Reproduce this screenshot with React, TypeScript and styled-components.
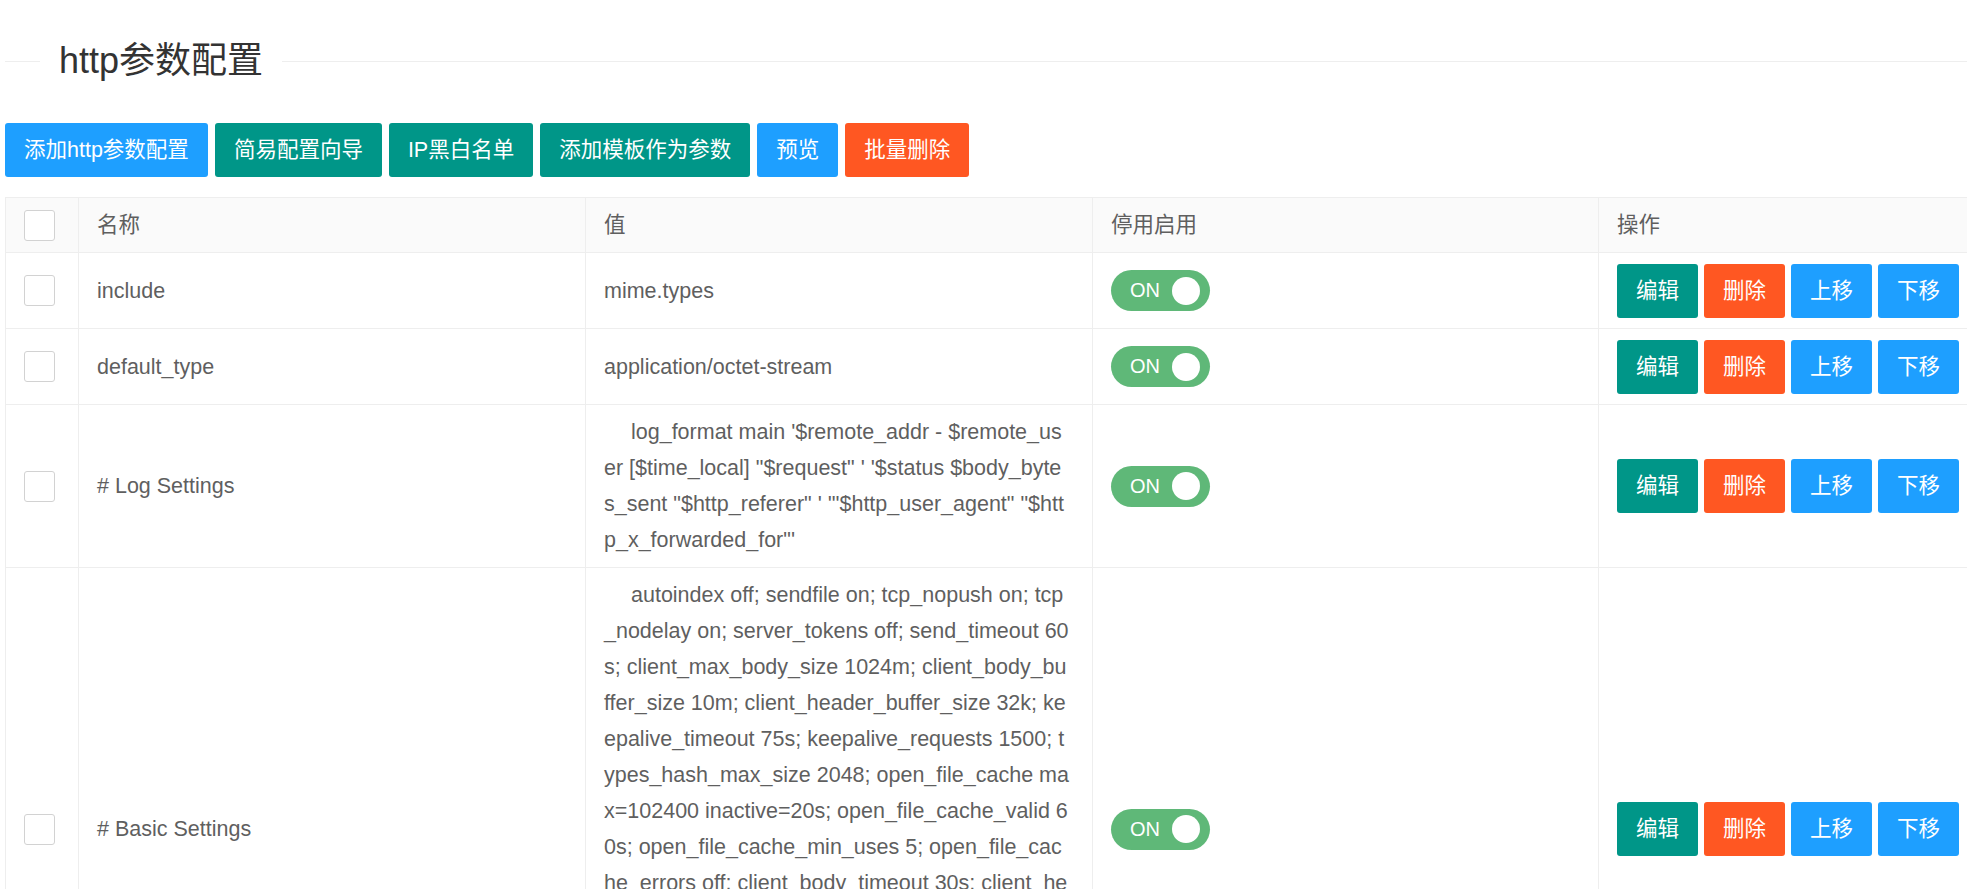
import React from "react";
import styled, { createGlobalStyle } from "styled-components";

const GlobalStyle = createGlobalStyle`
  html, body {
    margin: 0;
    padding: 0;
    overflow: hidden;
    background: #fff;
  }
  body {
    font-family: "Liberation Sans", "Noto Sans CJK SC", Arial, sans-serif;
    color: #5f5f5f;
  }
`;

const Page = styled.div`
  padding-left: 5px;
`;

const TitleRow = styled.div`
  display: flex;
  align-items: center;
  height: 42px;
  margin-top: 40px;
`;

const TitleLine = styled.div<{ $grow?: boolean }>`
  height: 1px;
  background: #eeeeee;
  ${(p) => (p.$grow ? "flex: 1;" : "width: 35px; flex: none;")}
`;

const Title = styled.h2`
  margin: 0;
  padding: 0 19px;
  font-size: 36px;
  font-weight: 400;
  line-height: 42px;
  color: #333;
  white-space: nowrap;
`;

const Toolbar = styled.div`
  display: flex;
  gap: 7px;
  margin-top: 41px;
`;

type Tone = "blue" | "teal" | "orange";
const toneColor: Record<Tone, string> = {
  blue: "#1E9FFF",
  teal: "#009688",
  orange: "#FF5722",
};

const Btn = styled.button<{ $tone: Tone }>`
  flex: none;
  height: 54px;
  padding: 0 19px;
  border: none;
  border-radius: 3px;
  background: ${(p) => toneColor[p.$tone]};
  color: #fff;
  font-family: inherit;
  font-size: 21.5px;
  line-height: 54px;
  white-space: nowrap;
  cursor: pointer;
`;

const Table = styled.table`
  margin-top: 20px;
  border-collapse: collapse;
  table-layout: fixed;
  width: 1973px;
`;

const Col = styled.col<{ $w: number }>`
  width: ${(p) => p.$w}px;
`;

const HeadCell = styled.th`
  background: #fafafa;
  border: 1px solid #eeeeee;
  padding: 9px 18px;
  text-align: left;
  font-weight: 400;
  font-size: 21.5px;
  line-height: 36px;
  color: #5f5f5f;
  vertical-align: middle;
  white-space: nowrap;
`;

const Cell = styled.td`
  border: 1px solid #eeeeee;
  padding: 9px 18px;
  font-size: 21.5px;
  line-height: 36px;
  color: #5f5f5f;
  vertical-align: middle;
`;

const CheckBox = styled.span`
  display: block;
  width: 31px;
  height: 31px;
  box-sizing: border-box;
  border: 1px solid #d2d2d2;
  border-radius: 3px;
  background: #fff;
`;

const TextLine = styled.span<{ $indent?: boolean }>`
  display: block;
  white-space: nowrap;
  ${(p) => (p.$indent ? "text-indent: 27px;" : "")}
`;

const Switch = styled.div`
  position: relative;
  display: flex;
  align-items: center;
  width: 99px;
  height: 41px;
  box-sizing: border-box;
  padding-left: 19px;
  border-radius: 21px;
  background: #5fb878;
  color: #fff;
  font-size: 20px;
  line-height: 41px;
`;

const Knob = styled.span`
  position: absolute;
  right: 10px;
  top: 6.5px;
  width: 28px;
  height: 28px;
  border-radius: 50%;
  background: #fff;
`;

const Actions = styled.div`
  display: flex;
  align-items: center;
  gap: 6px;
  height: 57px;
`;

type Row = { name: string; lines: string[]; indent?: boolean };

const rows: Row[] = [
  { name: "include", lines: ["mime.types"] },
  { name: "default_type", lines: ["application/octet-stream"] },
  {
    name: "# Log Settings",
    indent: true,
    lines: [
      "log_format main '$remote_addr - $remote_us",
      "er [$time_local] \"$request\" ' '$status $body_byte",
      "s_sent \"$http_referer\" ' '\"$http_user_agent\" \"$htt",
      "p_x_forwarded_for\"'",
    ],
  },
  {
    name: "# Basic Settings",
    indent: true,
    lines: [
      "autoindex off; sendfile on; tcp_nopush on; tcp",
      "_nodelay on; server_tokens off; send_timeout 60",
      "s; client_max_body_size 1024m; client_body_bu",
      "ffer_size 10m; client_header_buffer_size 32k; ke",
      "epalive_timeout 75s; keepalive_requests 1500; t",
      "ypes_hash_max_size 2048; open_file_cache ma",
      "x=102400 inactive=20s; open_file_cache_valid 6",
      "0s; open_file_cache_min_uses 5; open_file_cac",
      "he_errors off; client_body_timeout 30s; client_he",
      "ader_timeout 30s; reset_timedout_connection on; s",
      "end_lowat 12000; gzip on; gzip_min_length 1k; gz",
      "ip_buffers 4 16k; gzip_http_version 1.1; gzip_co",
      "mp_level 2; gzip_types text/plain application/x-j",
      "avascript text/css application/xml; gzip_vary on;",
    ],
  },
];

export default function App() {
  return (
    <>
      <GlobalStyle />
      <Page>
        <TitleRow>
          <TitleLine />
          <Title>http参数配置</Title>
          <TitleLine $grow />
        </TitleRow>

        <Toolbar>
          <Btn $tone="blue">添加http参数配置</Btn>
          <Btn $tone="teal">简易配置向导</Btn>
          <Btn $tone="teal">IP黑白名单</Btn>
          <Btn $tone="teal">添加模板作为参数</Btn>
          <Btn $tone="blue">预览</Btn>
          <Btn $tone="orange">批量删除</Btn>
        </Toolbar>

        <Table>
          <colgroup>
            <Col $w={73} />
            <Col $w={507} />
            <Col $w={507} />
            <Col $w={506} />
            <Col $w={380} />
          </colgroup>
          <thead>
            <tr>
              <HeadCell>
                <CheckBox />
              </HeadCell>
              <HeadCell>名称</HeadCell>
              <HeadCell>值</HeadCell>
              <HeadCell>停用启用</HeadCell>
              <HeadCell>操作</HeadCell>
            </tr>
          </thead>
          <tbody>
            {rows.map((r) => (
              <tr key={r.name}>
                <Cell>
                  <CheckBox />
                </Cell>
                <Cell>{r.name}</Cell>
                <Cell>
                  {r.lines.map((l, i) => (
                    <TextLine key={i} $indent={r.indent && i === 0}>
                      {l}
                    </TextLine>
                  ))}
                </Cell>
                <Cell>
                  <Switch>
                    ON
                    <Knob />
                  </Switch>
                </Cell>
                <Cell>
                  <Actions>
                    <Btn $tone="teal">编辑</Btn>
                    <Btn $tone="orange">删除</Btn>
                    <Btn $tone="blue">上移</Btn>
                    <Btn $tone="blue">下移</Btn>
                  </Actions>
                </Cell>
              </tr>
            ))}
          </tbody>
        </Table>
      </Page>
    </>
  );
}
